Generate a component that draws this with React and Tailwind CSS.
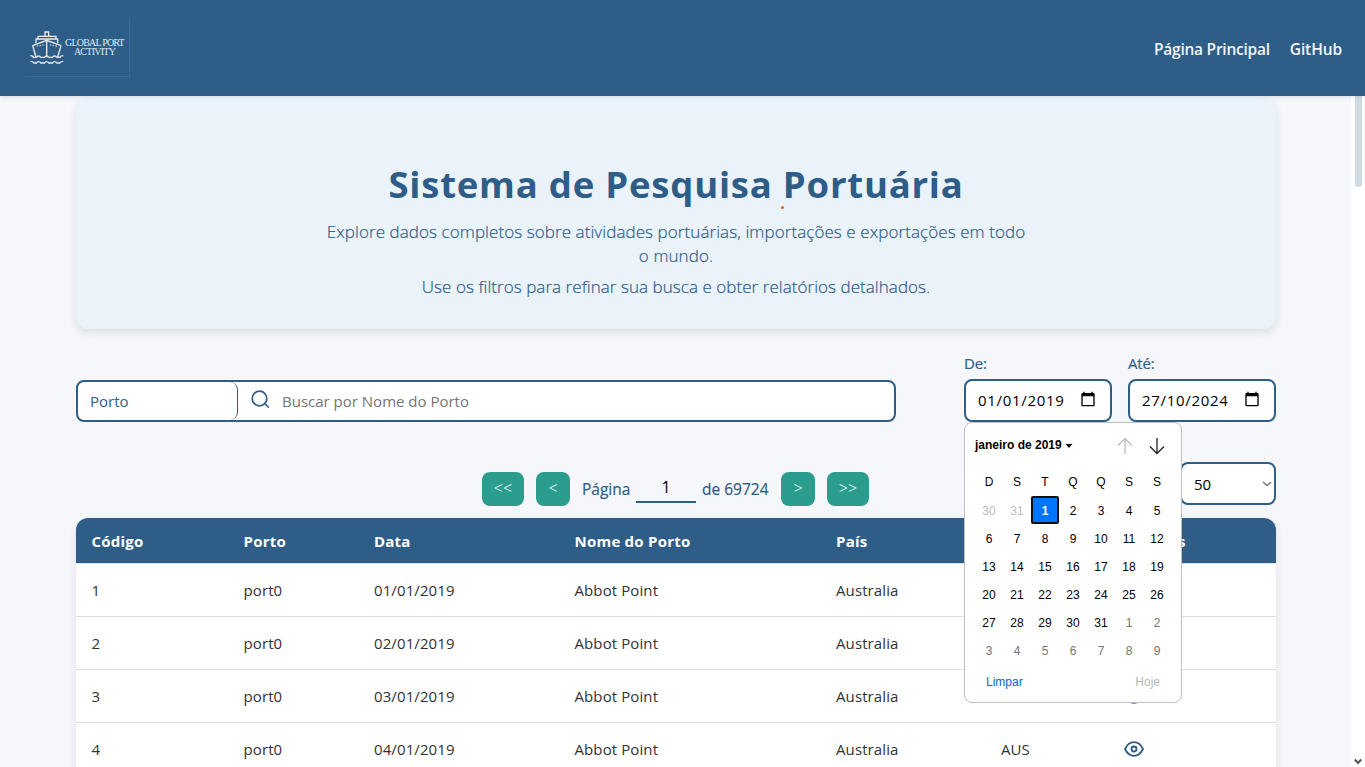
const rows = [
  ['1', 'port0', '01/01/2019', 'Abbot Point', 'Australia', ''],
  ['2', 'port0', '02/01/2019', 'Abbot Point', 'Australia', ''],
  ['3', 'port0', '03/01/2019', 'Abbot Point', 'Australia', ''],
  ['4', 'port0', '04/01/2019', 'Abbot Point', 'Australia', 'AUS'],
];

const columns = 'grid grid-cols-[152px_130.5px_200.5px_261.5px_165px_117.5px_1fr] pl-[15.5px]';

function Logo() {
  return (
    <div className="ml-[25px] mt-[19px] flex h-[58px] w-[105px] border-r border-b border-[#3a6a9b] pt-[11px] pl-[3px]">
      <svg width="37" height="36" viewBox="84 90 111 108" fill="none" stroke="#e9eef4" strokeWidth="4" className="shrink-0">
        <path d="M135 108V96H146V108M114 117V109H168V117M108 130V117H173V130" />
        <path d="M98 137L140 121L183 137M98 137L108 171M183 137L173 171M140 121V172" />
        <path d="M110 138h5M119 137h4M127 135h4M150 135h4M158 137h4M166 138h5" strokeWidth="3" />
        <path d="M91 167q8 0 9 5h9q7-8 14 0h10q7-8 14 0h10q7-8 14 0h9q2-5 10-5" />
        <path d="M91 184q7 0 11 5h7q7-8 14 0h10q7-8 14 0h10q7-8 14 0h8q4-5 11-5" />
      </svg>
      <div className="mt-[9px] w-[59px] text-center font-['Liberation_Serif',serif] text-[10px] leading-[8.5px] whitespace-nowrap text-[#dcebf0]">
        <div className="tracking-[-0.8px]">GLOBAL PORT</div>
        <div className="tracking-[-0.75px]">ACTIVITY</div>
      </div>
    </div>
  );
}

function DateField({ label, value }) {
  return (
    <div className="w-[148px]">
      <div className="h-[26px] text-[15px] leading-[20px] tracking-[-0.2px] text-[#2e5d88] [-webkit-text-stroke:0.2px]">{label}</div>
      <div className="flex h-[43px] items-center justify-between rounded-lg border-2 border-[#2e5d88] bg-white pr-[14px] pl-3 text-black">
        <span className="text-[15px] tracking-[0.7px]">{value}</span>
        <svg width="16" height="16" viewBox="0 0 24 24" className="mb-[3px]">
          <path d="M20 3h-1V1h-2v2H7V1H5v2H4c-1.1 0-2 .9-2 2v16c0 1.1.9 2 2 2h16c1.1 0 2-.9 2-2V5c0-1.1-.9-2-2-2zm0 18H4V8h16v13z" />
        </svg>
      </div>
    </div>
  );
}

function PageButton({ wide, children }) {
  return (
    <button className={(wide ? 'w-[42px]' : 'w-[34px]') + ' h-[34px] rounded-lg bg-[#2a9d8f] pb-[2px] text-[16px] font-light text-white'}>
      {children}
    </button>
  );
}

const days = [
  30, 31, 1, 2, 3, 4, 5, 6, 7, 8, 9, 10, 11, 12, 13, 14, 15, 16, 17, 18, 19, 20, 21,
  22, 23, 24, 25, 26, 27, 28, 29, 30, 31, 1, 2, 3, 4, 5, 6, 7, 8, 9,
];

function dayStyle(i) {
  if (i < 2) return 'text-[#bdbdbd]';
  if (i === 2) return 'rounded-[2px] border-2 border-[#101010] bg-[#0075ff] font-bold text-white';
  if (i > 32) return 'text-[#757575]';
  return 'text-black';
}

function Calendar() {
  return (
    <div className="absolute top-[422px] left-[964px] z-10 h-[281px] w-[218px] rounded-lg border border-[#bfbfbf] bg-white font-['Liberation_Sans',Arial,sans-serif] text-[12px]">
      <div className="flex h-[46px] items-center pl-[10px] font-bold text-black">
        <span className="mb-[2px]">janeiro de 2019</span>
        <svg width="8" height="5" viewBox="0 0 8 5" className="ml-[3px]"><path d="M0.5 0H7.500L4 4z" /></svg>
        <svg width="16" height="18" viewBox="0 0 16 18" fill="none" stroke="#bdbdbd" strokeWidth="1.3" className="ml-auto"><path d="M8 17V1.5M1 8.5L8 1.5L15 8.5" /></svg>
        <svg width="16" height="18" viewBox="0 0 16 18" fill="none" stroke="#222" strokeWidth="1.3" className="mr-[16px] ml-[16px]"><path d="M8 1V16.5M1 9.5L8 16.5L15 9.5" /></svg>
      </div>
      <div className="ml-[10px] grid w-[196px] grid-cols-7 text-center text-black">
        {['D', 'S', 'T', 'Q', 'Q', 'S', 'S'].map((d, i) => (
          <span key={i} className="h-[27px] leading-[26px]">{d}</span>
        ))}
        {days.map((d, i) => (
          <span key={i} className={'flex h-[28px] items-center justify-center pt-[2px] leading-[16px] ' + dayStyle(i)}>{d}</span>
        ))}
      </div>
      <div className="mt-[9px] flex justify-between pr-[21px] pl-[21px]">
        <span className="text-[#0067d6]">Limpar</span>
        <span className="text-[#b8b8b8]">Hoje</span>
      </div>
    </div>
  );
}

function EyeIcon() {
  return (
    <svg width="20" height="16" viewBox="0 0 20 16" fill="none" stroke="#2e5d88" strokeWidth="1.8">
      <path d="M1 8C3 3.8 6.2 1.2 10 1.2S17 3.8 19 8c-2 4.2-5.200 6.800-9 6.800S3 12.200 1 8z" />
      <circle cx="10" cy="8" r="2.500" />
    </svg>
  );
}

export default function App() {
  return (
    <div className="relative flex h-[767px] w-[1365px] flex-col overflow-hidden bg-[#f5f7fb] font-['Open_Sans','Noto_Sans',sans-serif]">
      <header className="relative z-20 flex h-[96px] shrink-0 justify-between bg-[#2e5d88] shadow-[0_1px_4px_rgba(0,0,0,0.12)]">
        <Logo />
        <nav className="flex items-center gap-5 pt-[4px] pr-[23px] text-[15.5px] font-semibold text-[#f2f6fa]">
          <a className="tracking-[-0.25px]">Página Principal</a>
          <a className="tracking-[-0.1px]">GitHub</a>
        </nav>
      </header>

      <div className="flex min-h-0 flex-1">
        <main className="w-[1351px] pt-[2px] pr-[75px] pl-[76px]">
          <section className="h-[231px] rounded-xl bg-[#eaf2fa] pt-[57px] text-center text-[#2e5d88] shadow-[0_4px_10px_rgba(0,0,0,0.1)]">
            <h1 className="text-[36.5px] leading-[58px] font-bold tracking-[0.78px]">
              <span className="relative">
                Sistema de Pesquisa Portuária
                <span className="absolute top-[47px] left-[393px] size-[3px] rounded-full bg-[#f26522]" />
              </span>
            </h1>
            <p className="mt-[7px] text-[17px] leading-[24px] font-light tracking-[0.08px] [-webkit-text-stroke:0.2px]">
              Explore dados completos sobre atividades portuárias, importações e exportações em todo
              <br />o mundo.
            </p>
            <p className="mt-[7px] text-[17px] leading-[24px] font-light tracking-[0.05px] [-webkit-text-stroke:0.2px]">
              Use os filtros para refinar sua busca e obter relatórios detalhados.
            </p>
          </section>

          <section className="mt-[24px] flex items-end justify-between">
            <div className="flex h-[42px] w-[820px] overflow-hidden rounded-lg border-2 border-[#2e5d88] bg-white text-[15px]">
              <div className="flex w-[160px] items-center rounded-lg border-r border-[#2e5d88] pl-3 text-[#2e5d88]">Porto</div>
              <svg width="20" height="20" viewBox="0 0 20 20" fill="none" stroke="#2e5d88" strokeWidth="1.7" className="mt-[7px] ml-[13px]">
                <circle cx="8.500" cy="9.500" r="7.300" />
                <path d="M13.700 14.500L17.700 18.500" />
              </svg>
              <span className="ml-[11px] flex items-center text-[#757575]">Buscar por Nome do Porto</span>
            </div>
            <div className="flex gap-4">
              <DateField label="De:" value="01/01/2019" />
              <DateField label="Até:" value="27/10/2024" />
            </div>
          </section>

          <section className="mt-[40px] flex h-[56px] justify-between">
            <div className="mt-[10px] ml-[406px] flex h-[34px] w-[387px] items-center text-[15.5px] text-[#2e5d88]">
              <PageButton wide>&lt;&lt;</PageButton>
              <span className="w-3" />
              <PageButton>&lt;</PageButton>
              <span className="ml-3 w-[54px] pt-[2px] [-webkit-text-stroke:0.2px]">Página</span>
              <span className="mb-[2px] h-[30px] w-[60px] border-b-2 border-[#2e5d88] text-center text-[16px] leading-[29px] text-black">1</span>
              <span className="ml-[6px] w-[79px] pt-[2px] [-webkit-text-stroke:0.2px]">de 69724</span>
              <PageButton>&gt;</PageButton>
              <span className="w-3" />
              <PageButton wide>&gt;&gt;</PageButton>
            </div>
            <div className="flex h-[43px] w-[96px] items-center justify-between rounded-lg border-2 border-[#2e5d88] bg-white pr-[2px] pl-[12px] text-[15px] text-black">
              <span className="pt-[1px]">50</span>
              <svg width="10" height="6" viewBox="0 0 10 6" fill="none" stroke="#777" strokeWidth="1.600"><path d="M1 1L5 4.500L9 1" /></svg>
            </div>
          </section>

          <section className="rounded-t-xl bg-white text-[15px] shadow-[0_4px_10px_rgba(0,0,0,0.1)]">
            <div className={columns + ' h-[45px] items-center rounded-t-xl bg-[#2e5d88] pt-[2px] font-bold tracking-[0.23px] text-white'}>
              <span>Código</span>
              <span>Porto</span>
              <span>Data</span>
              <span>Nome do Porto</span>
              <span>País</span>
              <span />
              <span className="tracking-[0.1px]">Detalhes</span>
            </div>
            {rows.map((r) => (
              <div key={r[0]} className={columns + ' h-[53px] items-center border-t border-[#dddddd] pt-[1px] tracking-[0.1px] text-[#333333]'}>
                {r.map((c, i) => (
                  <span key={i}>{c}</span>
                ))}
                <span className="pb-[2px] pl-[5.5px]"><EyeIcon /></span>
              </div>
            ))}
          </section>
        </main>

        <aside className="flex w-[14px] flex-col items-center justify-between bg-white pb-[2px]">
          <div className="h-[91px] w-[7px] rounded-b-[3px] bg-[#d0dae3]" />
          <svg width="8" height="7" viewBox="0 0 8 7" fill="none" stroke="#555" strokeWidth="2"><path d="M0.800 1.500L4 5L7.200 1.500" /></svg>
        </aside>
      </div>

      <Calendar />
    </div>
  );
}
